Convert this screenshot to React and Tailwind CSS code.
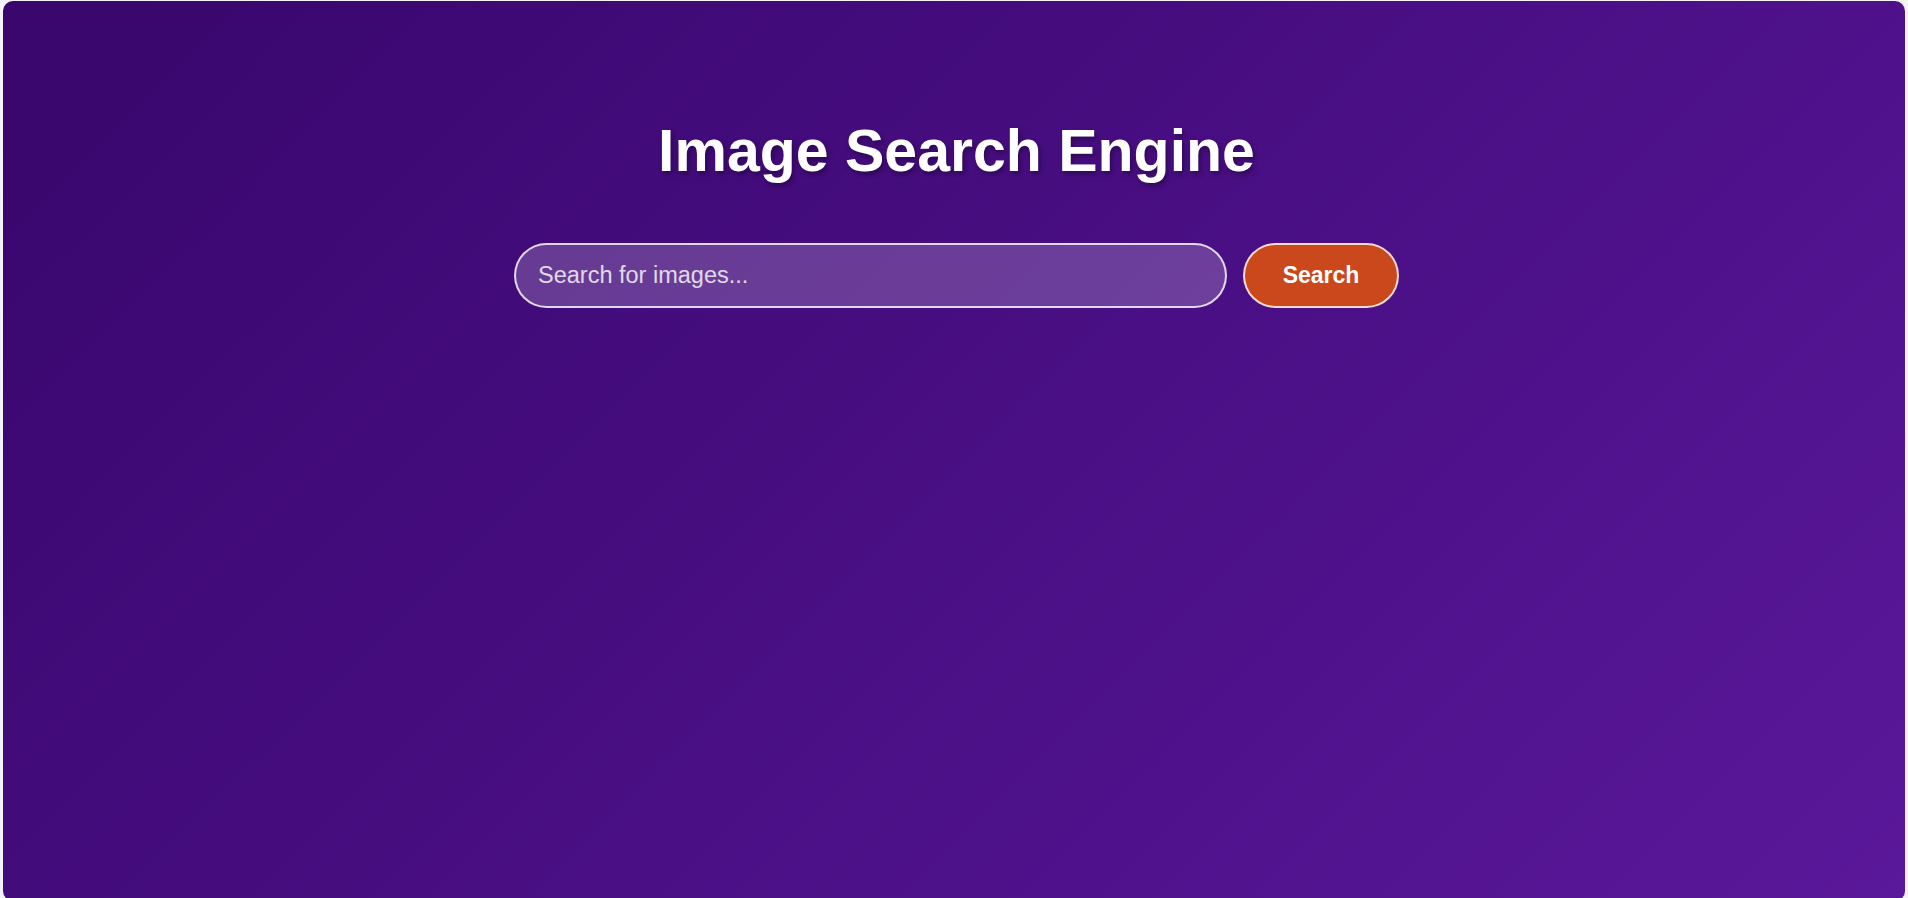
import React from "react";

const App = () => {
    return (
        <div className="min-h-screen bg-[#f4f4f6] pl-[3px] pr-[3px] pt-[1px]" style={{ fontFamily: '"Liberation Sans", Arial, sans-serif' }}>
            {/* Main panel */}
            <div className="min-h-[900px] rounded-[10px] bg-[linear-gradient(135deg,#38066c_0%,#4a0f85_55%,#5a189a_100%)] flex flex-col items-center pt-[117px]">
                <h1 className="ml-[5px] text-[59px] font-bold text-white leading-[1.15] [text-shadow:2px_3px_5px_rgba(0,0,0,0.35)]">
                    Image Search Engine
                </h1>

                {/* Search bar */}
                <div className="mt-[57px] flex items-center gap-4 ml-[5px]">
                    <input
                        type="text"
                        placeholder="Search for images..."
                        className="w-[713px] h-[65px] rounded-full border-2 border-white/80 bg-white/20 px-[22px] text-[23.5px] text-white placeholder:text-white/80 outline-none"
                    />
                    <button className="h-[65px] w-[156px] rounded-full border-2 border-white/80 bg-[#ca481b] text-[23px] font-bold text-white">
                        Search
                    </button>
                </div>
            </div>
        </div>
    );
};

export default App;
